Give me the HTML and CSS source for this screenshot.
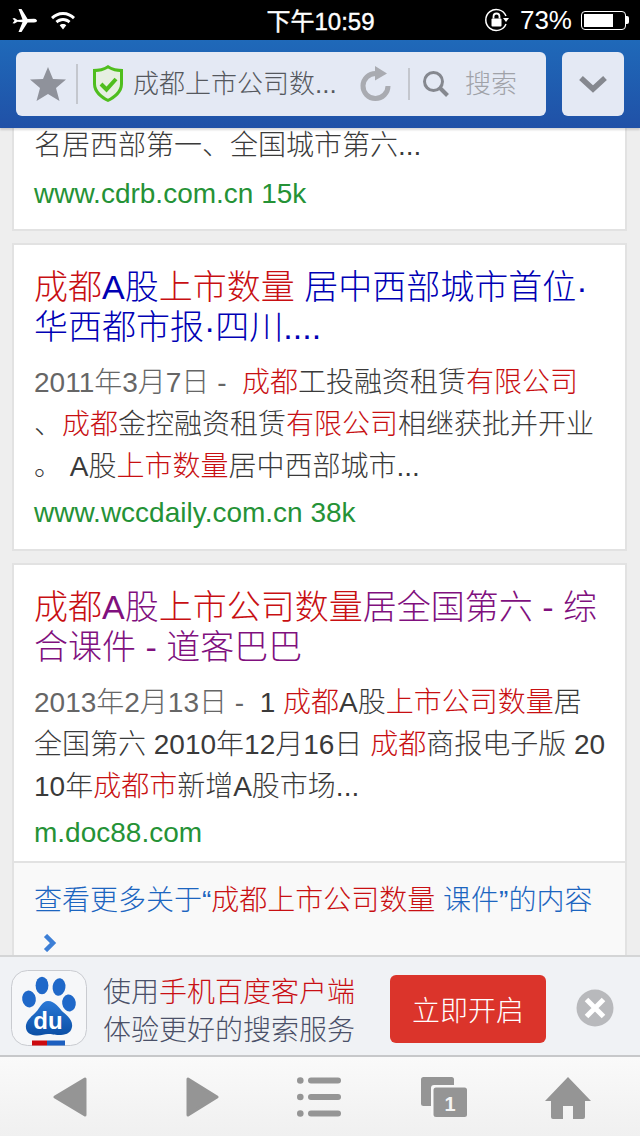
FILE: index.html
```html
<!DOCTYPE html>
<html lang="zh-CN">
<head>
<meta charset="utf-8">
<title>成都上市公司数量</title>
<link rel="stylesheet" href="styles.css">
</head>
<body>
<div class="phone">
  <div class="status">
    <div class="status-left">
      <svg class="plane" width="26" height="24" viewBox="0 0 26 24"><path fill="#fff" d="M0.5 10.5 L2.5 10 L5.5 12 L10.5 11.6 L6.5 1 L9.5 1 L15.6 11 L22 10.8 C24.5 10.8 25 12.5 25 12.8 C25 13.5 24 14.6 22 14.6 L15.6 14.6 L9.5 24 L6.5 24 L10.5 14.2 L5.5 13.8 L2.5 15.6 L0.5 15.2 L2.5 12.8 Z"/></svg>
      <svg class="wifi" width="26" height="20" viewBox="0 0 26 20"><path fill="#fff" d="M13 2 C18 2 22 4 25 7 L23 9.2 C20.500 6.800 17 5 13 5 C9 5 5.500 6.800 3 9.200 L1 7 C4 4 8 2 13 2 Z M13 8 C16 8 18.500 9.200 20.500 11 L18.500 13.200 C17 12 15 11 13 11 C11 11 9 12 7.500 13.200 L5.500 11 C7.500 9.200 10 8 13 8 Z M13 14 C14.500 14 15.500 14.500 16.300 15.200 L13 19.500 L9.700 15.200 C10.500 14.500 11.500 14 13 14 Z"/></svg>
    </div>
    <div class="clock">下午10:59</div>
    <div class="status-right">
      <svg class="rotlock" width="24" height="24" viewBox="0 0 24 24"><path fill="none" stroke="#fff" stroke-width="1.500" d="M21 8 A10.500 10.500 0 1 0 21 16"/><path fill="#fff" d="M18 10 L24 10 L21 14 Z"/><rect x="6.500" y="10.500" width="10" height="8" rx="1" fill="#fff"/><path fill="none" stroke="#fff" stroke-width="1.800" d="M8.500 10.500 V8.500 A3 3 0 0 1 14.500 8.500 V10.500"/></svg>
      <span class="pct">73%</span>
      <div class="battery"><div class="battery-fill"></div></div>
      <div class="battery-tip"></div>
    </div>
  </div>

  <header class="topbar">
    <div class="address">
      <svg class="star" width="38" height="36" viewBox="0 0 38 36"><path fill="#8f929b" d="M19 1 L24 13 L37 13.500 L27 22 L30.500 35 L19 28 L7.500 35 L11 22 L1 13.500 L14 13 Z"/></svg>
      <span class="vsep tall"></span>
      <svg class="shield" width="32" height="38" viewBox="0 0 32 38"><path fill="#4fbe1e" d="M16 0 C20 3 26 4 31 4 L31 19 C31 28 23 34 16 37 C9 34 1 28 1 19 L1 4 C6 4 12 3 16 0 Z"/><path fill="#e6efe2" d="M16 3.500 C20 6 25 7 28 7 L28 19 C28 26 21 31 16 33.800 C11 31 4 26 4 19 L4 7 C7 7 12 6 16 3.500 Z"/><path fill="none" stroke="#4fbe1e" stroke-width="4" d="M9 19 L14.500 24.500 L24 14"/></svg>
      <span class="address-title">成都上市公司数...</span>
      <svg class="reload" width="32" height="36" viewBox="0 0 32 36"><path fill="none" stroke="#a9abb1" stroke-width="5" d="M16 7.500 A12.500 12.500 0 1 0 28 20"/><path fill="#a9abb1" d="M15 0 L27 7.500 L15 14.500 Z"/></svg>
      <span class="vsep"></span>
      <svg class="loupe" width="28" height="28" viewBox="0 0 28 28"><circle cx="11.500" cy="11.500" r="9" fill="none" stroke="#85888f" stroke-width="3"/><path stroke="#85888f" stroke-width="4" d="M18 18 L25.500 25.500"/></svg>
      <span class="search-word">搜索</span>
    </div>
    <button class="drop">
      <svg width="28" height="18" viewBox="0 0 28 18"><path fill="none" stroke="#85888f" stroke-width="5.500" d="M2 3 L14 14 L26 3"/></svg>
    </button>
  </header>

  <main class="results">
    <article class="card card-first">
      <p class="body">名居西部第一、全国城市第六...</p>
      <p class="url">www.cdrb.com.cn 15k</p>
    </article>

    <article class="card">
      <h2 class="title"><em>成都</em>A股<em>上市数量</em> 居中西部城市首位·<br>华西都市报·四川....</h2>
      <p class="body"><span class="date">2011年3月7日 - &nbsp;</span><em>成都</em>工投融资租赁<em>有限公司</em><br>、<em>成都</em>金控融资租赁<em>有限公司</em>相继获批并开业<br>。 A股<em>上市数量</em>居中西部城市...</p>
      <p class="url">www.wccdaily.com.cn 38k</p>
    </article>

    <article class="card card-open">
      <div class="card-main">
        <h2 class="title visited"><em>成都</em>A股<em>上市公司数量</em>居全国第六 - 综<br>合课件 - 道客巴巴</h2>
        <p class="body"><span class="date">2013年2月13日 - &nbsp;</span>1 <em>成都</em>A股<em>上市公司数量</em>居<br>全国第六 2010年12月16日 <em>成都</em>商报电子版 20<br>10年<em>成都市</em>新增A股市场...</p>
        <p class="url">m.doc88.com</p>
      </div>
      <div class="more">
        <p class="more-text">查看更多关于“<em>成都上市公司数量</em> 课件”的内容</p>
        <svg class="more-arrow" width="14" height="18" viewBox="0 0 14 18"><path fill="none" stroke="#3d7fd6" stroke-width="4.500" d="M2.500 1.500 L10 9 L2.500 16.500"/></svg>
      </div>
    </article>
  </main>

  <aside class="promo">
    <svg class="app-icon" width="76" height="76" viewBox="0 0 76 76">
      <defs><linearGradient id="paw" x1="0" y1="0" x2="0" y2="1"><stop offset="0" stop-color="#2a78d6"/><stop offset="1" stop-color="#0b4fa5"/></linearGradient></defs>
      <rect x="0.500" y="0.500" width="75" height="75" rx="16" fill="#f6f7f9" stroke="#c9cbd0"/>
      <path fill="#cc0a10" d="M21 70.500 H36 V75.500 H21 Z"/>
      <path fill="#1c5fc0" d="M36 70.500 H54 V75.500 H36 Z"/>
      <g fill="#1f68c9">
        <ellipse cx="18" cy="29" rx="6.800" ry="8.500" transform="rotate(-10 18 29)"/>
        <ellipse cx="31" cy="15.500" rx="6.400" ry="8.800"/>
        <ellipse cx="48" cy="17" rx="6.400" ry="8.800" transform="rotate(8 48 17)"/>
        <ellipse cx="58" cy="33" rx="6.800" ry="8.500" transform="rotate(-8 58 33)"/>
      </g>
      <path fill="url(#paw)" d="M37 31 C44 31 48 38 52 42 C58 47 62 51 61 57 C60 64 53 65 48 65 C43 65 41 64 37 64 C33 64 30 66 25 65.500 C19 65 14 62 15 55 C16 50 20 47 25 42 C29 38 31 31 37 31 Z"/>
      <text class="du" x="37" y="59" text-anchor="middle">du</text>
    </svg>
    <div class="promo-text">
      <p>使用<em>手机百度客户端</em></p>
      <p>体验更好的搜索服务</p>
    </div>
    <button class="open-btn">立即开启</button>
    <svg class="close" width="38" height="38" viewBox="0 0 38 38"><circle cx="19" cy="19" r="18.500" fill="#b8b9bc"/><path stroke="#fff" stroke-width="5" d="M10.500 10.500 L27.500 27.500 M27.500 10.500 L10.500 27.500"/></svg>
  </aside>

  <nav class="toolbar">
    <svg class="tool-back" width="34" height="40" viewBox="0 0 34 40"><path fill="#959595" stroke="#959595" stroke-width="3" stroke-linejoin="round" d="M32 2 V38 L2 20 Z"/></svg>
    <svg class="tool-fwd" width="33" height="40" viewBox="0 0 33 40"><path fill="#959595" stroke="#959595" stroke-width="3" stroke-linejoin="round" d="M2 2 V38 L31 20 Z"/></svg>
    <svg class="tool-list" width="44" height="40" viewBox="0 0 44 40"><g fill="#959595"><circle cx="3.300" cy="3.500" r="3.300"/><circle cx="3.300" cy="20" r="3.300"/><circle cx="3.300" cy="36.500" r="3.300"/><rect x="11" y="0.500" width="33" height="6" rx="3"/><rect x="11" y="17" width="33" height="6" rx="3"/><rect x="11" y="33.500" width="33" height="6" rx="3"/></g></svg>
    <div class="tabs">
      <svg width="46" height="40" viewBox="0 0 46 40"><rect x="0" y="0" width="33" height="29" rx="2.500" fill="#959595"/><rect x="10" y="8" width="36" height="32" rx="3" fill="#f8f8f8"/><rect x="12.500" y="10.500" width="33.500" height="29.500" rx="2.500" fill="#959595"/></svg>
      <span class="tab-count">1</span>
    </div>
    <svg class="tool-home" width="46" height="42" viewBox="0 0 46 42"><path fill="#959595" d="M23 0 L46 24 L40 24 L40 40 Q40 42 38 42 L28 42 L28 29 L18 29 L18 42 L8 42 Q6 42 6 40 L6 24 L0 24 Z"/></svg>
  </nav>
</div>
</body>
</html>
```
FILE: styles.css
```css
* { box-sizing: border-box; margin: 0; padding: 0; }
html, body { width: 640px; height: 1136px; overflow: hidden; }
body { font-family: "Liberation Sans", "Noto Sans CJK SC", sans-serif; background: #eeeeee; }
em { font-style: normal; }

.phone { width: 640px; height: 1136px; display: flex; flex-direction: column; }

.status { height: 40px; flex: none; background: #000; color: #fff; display: grid; grid-template-columns: 1fr auto 1fr; align-items: center; padding: 0 11px 0 12px; }
.status-left { display: flex; align-items: center; gap: 12px; }
.clock { font-size: 24px; font-weight: 400; -webkit-text-stroke: 0.4px #fff; padding-bottom: 2px; }
.status-right { display: flex; align-items: center; justify-content: flex-end; }
.rotlock { margin-right: 11px; }
.pct { font-size: 26px; margin-right: 9px; }
.battery { width: 45px; height: 19px; border: 1px solid #fff; border-radius: 4px; padding: 2px; }
.battery-fill { width: 75%; height: 100%; background: #fff; }
.battery-tip { width: 3px; height: 8px; background: #fff; border-radius: 0 2px 2px 0; }

.topbar { height: 88px; flex: none; background: linear-gradient(#1f69b9, #2051a7); padding: 12px 16px; display: flex; gap: 16px; box-shadow: 0 2px 2px rgba(0,0,0,.15); position: relative; z-index: 2; }
.address { width: 530px; height: 64px; background: #e4e9f4; border-radius: 6px; display: flex; align-items: center; padding-left: 13px; }
.star { flex: none; }
.vsep { width: 2px; height: 32px; background: #c4c7ce; flex: none; margin: 0 12px 0 16px; }
.vsep.tall { height: 40px; margin: 0 14px 0 9px; }
.shield { flex: none; }
.address-title { font-size: 26px; font-weight: 300; color: #55585e; margin-left: 9px; width: 227px; white-space: nowrap; padding-bottom: 6px; }
.reload { flex: none; }
.loupe { flex: none; }
.search-word { font-size: 26px; font-weight: 300; color: #a0a2a8; margin-left: 15px; padding-bottom: 6px; }
.drop { width: 62px; height: 64px; border: 0; background: #e4e9f4; border-radius: 6px; display: flex; align-items: center; justify-content: center; }

.results { flex: 1; min-height: 0; overflow: hidden; padding: 0 13px 0 12px; display: flex; flex-direction: column; gap: 12px; }
.card { background: #fff; border: 2px solid #e2e2e2; padding: 22px 20px 14px 20px; flex: none; }
.card-first { border-top: 0; padding-top: 0; height: 103px; }
.card-first .body { margin-top: -3px; }
.card-first .url { margin-top: 5px; }
.card-open { padding: 0; border-bottom: 0; }
.card-main { padding: 22px 20px 6px 20px; }
.title { font-size: 34px; line-height: 40px; font-weight: 300; color: #0000b4; margin-bottom: 15px; white-space: nowrap; }
.title em { color: #c80f12; }
.title.visited { color: #80107e; }
.body { font-size: 28px; font-weight: 300; line-height: 42px; color: #3a3a3a; white-space: nowrap; }
.body em { color: #c80f12; }
.date { color: #666; }
.url { font-size: 28px; font-weight: 300; line-height: 44px; margin-top: 3px; color: #259236; white-space: nowrap; }

.more { background: #f9f9f9; border-top: 2px solid #e2e2e2; padding: 17px 20px 0 20px; height: 120px; }
.more-text { font-size: 28px; font-weight: 300; line-height: 42px; color: #1c65c0; white-space: nowrap; }
.more-text em { color: #c80f12; }
.more-arrow { display: block; margin: 12px 0 0 9px; }

.promo { height: 102px; flex: none; background: #f0f2f5; border-top: 2px solid #d4d5d6; border-bottom: 2px solid #c7c8ca; display: flex; align-items: center; padding: 4px 0 0 11px; }
.app-icon { flex: none; }
.du { font-family: "Liberation Sans", sans-serif; font-size: 24px; font-weight: 700; fill: #fff; }
.promo-text { margin-left: 16px; width: 287px; font-size: 28px; font-weight: 300; line-height: 38px; color: #4a5068; white-space: nowrap; padding-top: 8px; }
.promo-text em { color: #c90f14; }
.open-btn { width: 156px; height: 68px; margin-top: 2px; border: 0; background: #db342b; color: #fff; border-radius: 6px; font-family: inherit; font-size: 28px; font-weight: 300; flex: none; }
.close { margin-left: 30px; flex: none; }

.toolbar { height: 79px; flex: none; background: linear-gradient(#fafafa, #f0f0f0); display: flex; align-items: flex-start; padding: 20px 0 0 53px; }
.tool-fwd { margin-left: 99px; }
.tool-list { margin-left: 78px; }
.tabs { position: relative; width: 46px; height: 40px; margin-left: 80px; }
.tool-home { margin-left: 78px; }
.tab-count { position: absolute; left: 12px; right: 0; top: 10px; height: 30px; color: #f4f4f4; font-size: 20px; font-weight: 700; line-height: 34px; text-align: center; }
```
